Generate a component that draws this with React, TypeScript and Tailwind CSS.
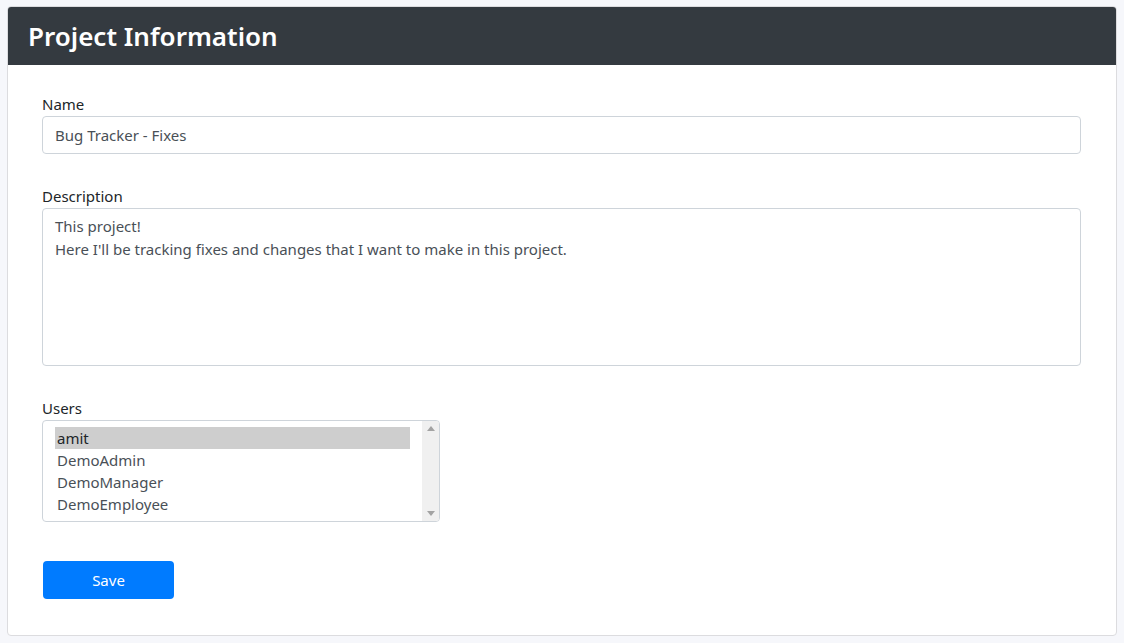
export default function App() {
  const users = ['amit', 'DemoAdmin', 'DemoManager', 'DemoEmployee'];
  return (
    <div
      className="min-h-[643px] bg-[#f6f7fb] pt-[6px] px-[7px] pb-[7px]"
      style={{ fontFamily: '"Segoe UI", "Noto Sans", Roboto, sans-serif' }}
    >
      <div className="bg-white border border-[#dcdcdf] rounded-[4px] overflow-hidden">
        {/* Header */}
        <div className="bg-[#343a40] h-[58px] flex items-center px-5">
          <h2 className="text-white text-[26px] font-semibold leading-none">Project Information</h2>
        </div>

        {/* Body */}
        <div className="pt-[27px] pb-[36px] pl-[34px] pr-[35px] text-[#212529]">
          <div className="flex flex-col">
            <label className="text-[15px] leading-6">Name</label>
            <div className="h-[38px] border border-[#ced4da] rounded-[4px] px-3 flex items-center text-[15px] text-[#495057]">
              Bug Tracker - Fixes
            </div>
          </div>

          <div className="flex flex-col mt-[30px]">
            <label className="text-[15px] leading-6">Description</label>
            <div className="h-[158px] border border-[#ced4da] rounded-[4px] px-3 py-[6px] text-[15px] leading-[23px] text-[#495057]">
              <div>This project!</div>
              <div>Here I'll be tracking fixes and changes that I want to make in this project.</div>
            </div>
          </div>

          <div className="flex flex-col mt-[30px]">
            <label className="text-[15px] leading-6">Users</label>
            <div className="w-[398px] h-[102px] border border-[#ced4da] rounded-[4px] flex">
              <div className="flex-1 pl-3 pr-3 pt-[6px]">
                {users.map((u, i) => (
                  <div
                    key={u}
                    className={
                      i === 0
                        ? 'h-[22px] leading-[22px] px-[2px] text-[15px] bg-[#cecece] text-[#212529]'
                        : 'h-[22px] leading-[22px] px-[2px] text-[15px] text-[#495057]'
                    }
                  >
                    {u}
                  </div>
                ))}
              </div>
              <div className="w-[17px] bg-[#f0f0f0] flex flex-col justify-between items-center py-[5px] rounded-r-[3px]">
                <svg width="8" height="5" viewBox="0 0 8 5">
                  <path d="M0 5 L4 0 L8 5 Z" fill="#a3a3a3" />
                </svg>
                <svg width="8" height="5" viewBox="0 0 8 5">
                  <path d="M0 0 L4 5 L8 0 Z" fill="#a3a3a3" />
                </svg>
              </div>
            </div>
          </div>

          <div className="mt-[39px]">
            <button className="w-[131px] h-[38px] ml-px bg-[#007bff] text-white text-[15px] rounded-[4px]">
              Save
            </button>
          </div>
        </div>
      </div>
    </div>
  );
}
